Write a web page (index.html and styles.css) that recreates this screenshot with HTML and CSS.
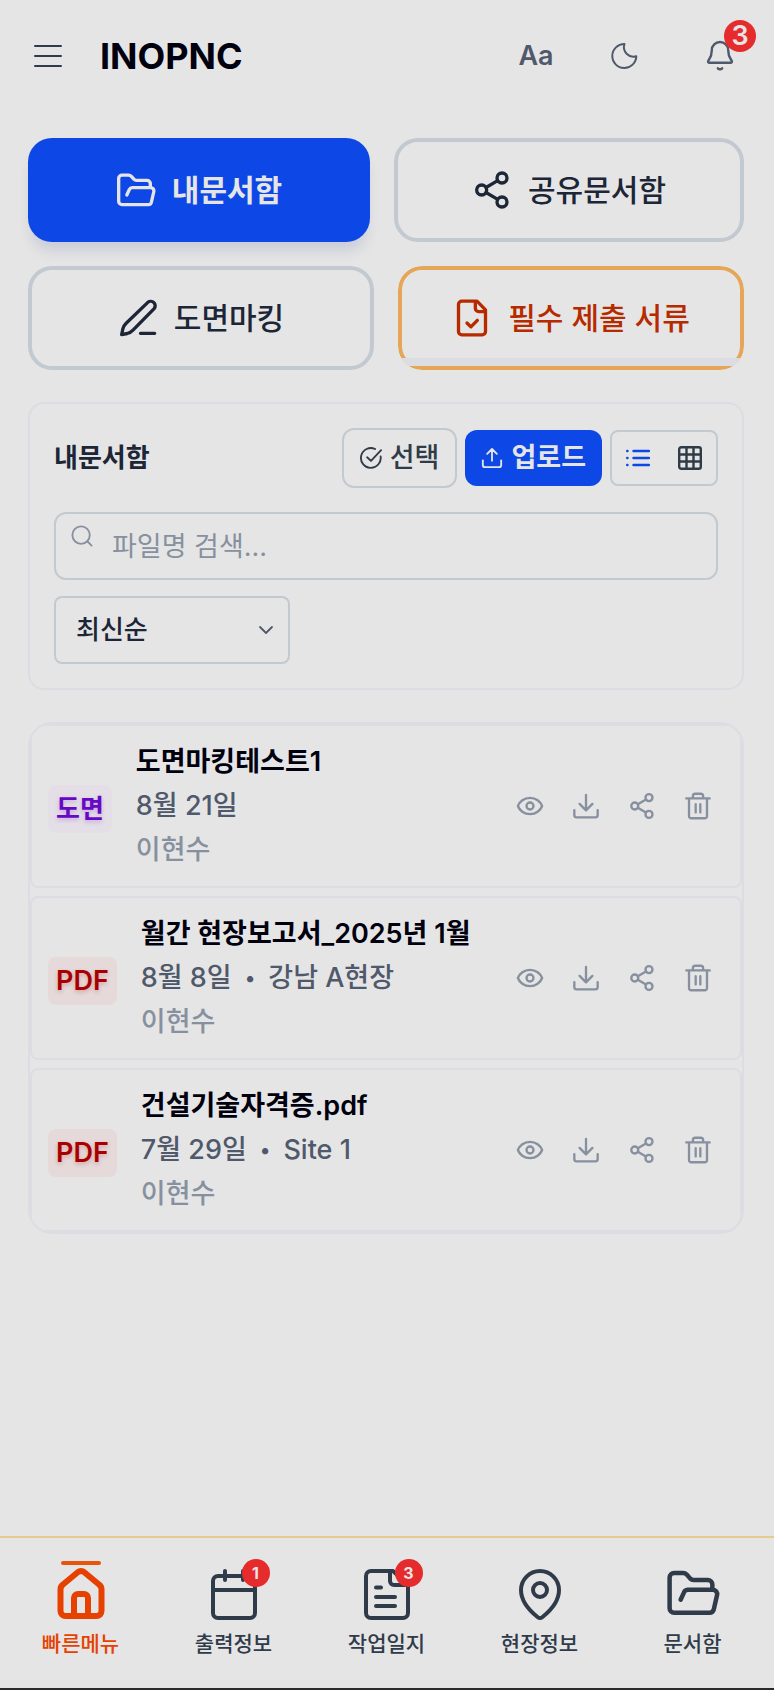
FILE: index.html
```html
<!DOCTYPE html>
<html lang="ko">
<head>
<meta charset="utf-8">
<meta name="viewport" content="width=device-width, initial-scale=1">
<title>INOPNC 문서함</title>
<link rel="stylesheet" href="styles.css">
</head>
<body>
<svg class="sprite" aria-hidden="true">
  <symbol id="folder" viewBox="0 0 24 24"><path d="M6.500 15l1.500-3.300a2 2 0 0 1 1.800-1.100h11.100a1.900 1.900 0 0 1 1.800 2.300l-1.500 6.500a1.900 1.900 0 0 1-1.800 1.400H3.600a2 2 0 0 1-2-2V5.100a2 2 0 0 1 2-2h4a2.200 2.200 0 0 1 1.600.7l1.500 1.700a2.200 2.200 0 0 0 1.600.7h6.300a2 2 0 0 1 2 2v2.400"/></symbol>
  <symbol id="share" viewBox="0 0 24 24"><circle cx="18" cy="4.8" r="3"/><circle cx="5.8" cy="12" r="3"/><circle cx="18" cy="19.2" r="3"/><path d="M8.4 10.5l7-4.1M8.4 13.5l7 4.1"/></symbol>
  <symbol id="pen" viewBox="0 0 24 24"><path d="M13.500 21.200h8.500M17.900 2.600a2.700 2.700 0 0 1 3.800 3.800L9 19.300a7 7 0 0 1-3.400 2l-3.400.7.700-3.400a7 7 0 0 1 2-3.400z"/></symbol>
  <symbol id="filecheck" viewBox="0 0 24 24"><path d="M15 1.900H5.900a2 2 0 0 0-2 2v16.200a2 2 0 0 0 2 2h12.200a2 2 0 0 0 2-2V7.100zM14 2v4.200a2 2 0 0 0 2 2h4M9 15l2.300 2.300 3.900-3.900"/></symbol>
  <symbol id="eye" viewBox="0 0 24 24"><path d="M1.6 12C3 8.200 7 5 12 5s9 3.200 10.400 7C21 15.800 17 19 12 19S3 15.800 1.600 12z"/><circle cx="12" cy="12" r="3"/></symbol>
  <symbol id="download" viewBox="0 0 24 24"><path d="M12 2.500v13M6.500 10.200l5.500 5.500 5.500-5.500M2 15.500v4.300a2 2 0 0 0 2 2h16a2 2 0 0 0 2-2v-4.300"/></symbol>
  <symbol id="trash" viewBox="0 0 24 24"><path d="M2 5.500h20M4.300 5.500v15.200a1.800 1.800 0 0 0 1.800 1.800h11.800a1.800 1.800 0 0 0 1.800-1.800V5.500M7.600 5.500V3.600A2.100 2.100 0 0 1 9.700 1.500h4.600a2.100 2.100 0 0 1 2.100 2.100v1.900M10 10.500v7M14 10.500v7"/></symbol>
</svg>

<header class="topbar">
  <button class="icon-button menu-button" aria-label="메뉴"><svg class="icon icon-menu" viewBox="0 0 32 32"><path d="M3 6h26M3 16h26M3 26h26"/></svg></button>
  <h1 class="brand">INOPNC</h1>
  <div class="tools">
    <button class="text-size" aria-label="글자 크기">Aa</button>
    <button class="icon-button tool" aria-label="다크 모드"><svg class="icon icon-tool" viewBox="0 0 32 32"><path d="M16.500 4A12 12 0 1 0 28.300 16.200a9.500 9.500 0 0 1-11.800-12.200z"/></svg></button>
    <button class="icon-button tool" aria-label="알림 3개"><svg class="icon icon-tool icon-bell" viewBox="0 0 32 32"><path d="M16 2a8.200 8.200 0 0 0-8.200 8.200c0 6.400-2 8-3.500 10.400a1.400 1.400 0 0 0 1.200 2.200h21a1.400 1.400 0 0 0 1.200-2.200c-1.500-2.400-3.500-4-3.500-10.400A8.200 8.200 0 0 0 16 2zM13.800 28.200a2.800 2.800 0 0 0 4.400 0"/></svg><span class="count count-large">3</span></button>
  </div>
</header>

<main class="content">
  <nav class="tabs" aria-label="문서함 종류">
    <div class="tab-row">
      <button class="tab tab-active"><svg class="icon icon-tab"><use href="#folder"/></svg>내문서함</button>
      <button class="tab"><svg class="icon icon-tab"><use href="#share"/></svg>공유문서함</button>
    </div>
    <div class="tab-row">
      <button class="tab"><svg class="icon icon-tab"><use href="#pen"/></svg>도면마킹</button>
      <button class="tab tab-required"><svg class="icon icon-tab"><use href="#filecheck"/></svg>필수 제출 서류</button>
    </div>
  </nav>

  <section class="panel">
    <div class="panel-head">
      <h2 class="panel-title">내문서함</h2>
      <div class="panel-actions">
        <button class="pick"><svg class="icon icon-small" viewBox="0 0 24 24"><path d="M22.500 10.200A10.800 10.800 0 1 1 16.500 2.200M7.800 11.200l4.200 4 11-11.700"/></svg>선택</button>
        <button class="upload"><svg class="icon icon-small" viewBox="0 0 24 24"><path d="M12 15V2.500M6.700 7.500L12 2.200l5.300 5.300M2 14.500v5a2.500 2.500 0 0 0 2.500 2.500h15a2.500 2.500 0 0 0 2.500-2.500v-5"/></svg>업로드</button>
        <div class="view-switch">
          <button class="view view-on" aria-label="목록 보기"><svg class="icon icon-view" viewBox="0 0 24 24"><path d="M7.500 5h15.500M7.500 12h15.500M7.500 19h15.500M1.200 5h.3M1.200 12h.3M1.200 19h.3"/></svg></button>
          <button class="view" aria-label="격자 보기"><svg class="icon icon-view" viewBox="0 0 24 24"><rect x="1.200" y="1.200" width="21.600" height="21.600" rx="2"/><path d="M1 8.500h22M1 15.500h22M8.500 1v22M15.500 1v22"/></svg></button>
        </div>
      </div>
    </div>
    <div class="filters">
      <div class="search">
        <svg class="icon search-icon" viewBox="0 0 24 24"><circle cx="11" cy="11" r="9.500"/><path d="M18 18l4.500 4.500"/></svg>
        <input class="search-input" type="text" aria-label="파일명 검색" placeholder="파일명 검색...">
      </div>
      <div class="sort">
        <select class="sort-select" aria-label="정렬"><option>최신순</option><option>이름순</option></select>
        <svg class="icon sort-icon" viewBox="0 0 16 16"><path d="M2 5l6 6 6-6"/></svg>
      </div>
    </div>
  </section>

  <ul class="files">
    <li class="file">
      <span class="kind kind-drawing">도면</span>
      <div class="file-text"><p class="file-name">도면마킹테스트1</p><p class="file-meta">8월 21일</p><p class="file-owner">이현수</p></div>
      <div class="file-actions">
        <button class="action" aria-label="보기"><svg class="icon icon-action"><use href="#eye"/></svg></button>
        <button class="action" aria-label="다운로드"><svg class="icon icon-action"><use href="#download"/></svg></button>
        <button class="action" aria-label="공유"><svg class="icon icon-action"><use href="#share"/></svg></button>
        <button class="action" aria-label="삭제"><svg class="icon icon-action"><use href="#trash"/></svg></button>
      </div>
    </li>
    <li class="file">
      <span class="kind kind-pdf">PDF</span>
      <div class="file-text"><p class="file-name">월간 현장보고서_2025년 1월</p><p class="file-meta"><span>8월 8일</span><span class="dot">•</span><span>강남 A현장</span></p><p class="file-owner">이현수</p></div>
      <div class="file-actions">
        <button class="action" aria-label="보기"><svg class="icon icon-action"><use href="#eye"/></svg></button>
        <button class="action" aria-label="다운로드"><svg class="icon icon-action"><use href="#download"/></svg></button>
        <button class="action" aria-label="공유"><svg class="icon icon-action"><use href="#share"/></svg></button>
        <button class="action" aria-label="삭제"><svg class="icon icon-action"><use href="#trash"/></svg></button>
      </div>
    </li>
    <li class="file">
      <span class="kind kind-pdf">PDF</span>
      <div class="file-text"><p class="file-name">건설기술자격증.pdf</p><p class="file-meta"><span>7월 29일</span><span class="dot">•</span><span>Site 1</span></p><p class="file-owner">이현수</p></div>
      <div class="file-actions">
        <button class="action" aria-label="보기"><svg class="icon icon-action"><use href="#eye"/></svg></button>
        <button class="action" aria-label="다운로드"><svg class="icon icon-action"><use href="#download"/></svg></button>
        <button class="action" aria-label="공유"><svg class="icon icon-action"><use href="#share"/></svg></button>
        <button class="action" aria-label="삭제"><svg class="icon icon-action"><use href="#trash"/></svg></button>
      </div>
    </li>
  </ul>
</main>

<nav class="bottom-nav" aria-label="주 메뉴">
  <a class="nav-item nav-current" href="#home"><span class="nav-icon"><svg class="icon icon-nav icon-home" viewBox="0 0 56 56"><path d="M28 5a5 5 0 0 0-3.300 1.300L10 18.500a6 6 0 0 0-2.500 5V45a5 5 0 0 0 5 5h31a5 5 0 0 0 5-5V23.500a6 6 0 0 0-2.500-5L31.300 6.300A5 5 0 0 0 28 5zM21 50V32a4 4 0 0 1 4-4h6a4 4 0 0 1 4 4v18"/></svg></span>빠른메뉴</a>
  <a class="nav-item" href="#attendance"><span class="nav-icon"><svg class="icon icon-nav" viewBox="0 0 56 56"><rect x="7" y="10" width="42" height="42" rx="5"/><path d="M7 24h42M19 5v9M37 5v9"/></svg><span class="count">1</span></span>출력정보</a>
  <a class="nav-item" href="#journal"><span class="nav-icon"><svg class="icon icon-nav" viewBox="0 0 56 56"><path d="M34 5H12a5 5 0 0 0-5 5v37a5 5 0 0 0 5 5h32a5 5 0 0 0 5-5V19zM31 5v10a4 4 0 0 0 4 4h14M17 21.500h5M17 31h19M17 40h19"/></svg><span class="count">3</span></span>작업일지</a>
  <a class="nav-item" href="#sites"><span class="nav-icon"><svg class="icon icon-nav" viewBox="0 0 56 56"><path d="M28 5A19 19 0 0 0 9 24c0 11 9 21 16.500 27a4 4 0 0 0 5 0C38 45 47 35 47 24A19 19 0 0 0 28 5z"/><circle cx="28" cy="24" r="7"/></svg></span>현장정보</a>
  <a class="nav-item" href="#documents"><span class="nav-icon"><svg class="icon icon-nav icon-documents"><use href="#folder"/></svg></span>문서함</a>
</nav>
</body>
</html>
```
FILE: styles.css
```css
* { box-sizing: border-box; }
body {
  margin: 0;
  min-height: 100vh;
  display: flex;
  flex-direction: column;
  background: #e5e5e5;
  color: #1c2637;
  font-family: Inter, "Noto Sans CJK KR", sans-serif;
  font-size: 27px;
  font-weight: 500;
  line-height: 40px;
}
h1, h2, p, ul { margin: 0; padding: 0; }
button, input, select {
  margin: 0;
  padding: 0;
  border: 0;
  background: none;
  color: inherit;
  font: inherit;
}
.sprite { position: absolute; width: 0; height: 0; }
.icon {
  flex: none;
  display: block;
  fill: none;
  stroke: currentColor;
  stroke-width: 2;
  stroke-linecap: round;
  stroke-linejoin: round;
}

.topbar {
  display: flex;
  align-items: center;
  height: 112px;
  padding: 0 14px 0 28px;
}
.icon-button {
  display: flex;
  align-items: center;
  justify-content: center;
  height: 64px;
}
.menu-button { width: 40px; color: #303b4d; }
.icon-menu { width: 32px; height: 32px; }
.brand {
  margin-left: 32px;
  color: #00000f;
  font-size: 36px;
  line-height: 44px;
  font-weight: 700;
}
.tools {
  display: flex;
  gap: 16px;
  margin-left: auto;
  color: #50596b;
}
.text-size { width: 64px; font-weight: 600; }
.tool { position: relative; width: 80px; }
.icon-tool { width: 32px; height: 32px; }
.icon-bell { stroke-width: 2.4; }
.count {
  position: absolute;
  top: -7px;
  right: -8px;
  width: 28px;
  height: 28px;
  border-radius: 50%;
  background: #e52b2b;
  color: #e5e5e5;
  font-size: 16px;
  line-height: 28px;
  font-weight: 700;
  text-align: center;
}
.count-large {
  top: -4px;
  right: 4px;
  width: 32px;
  height: 32px;
  font-size: 27px;
  line-height: 32px;
  font-weight: 600;
}

.content {
  display: flex;
  flex-direction: column;
  gap: 32px;
  padding: 26px 30px 32px 28px;
}
.tabs { display: flex; flex-direction: column; gap: 24px; }
.tab-row { display: flex; gap: 24px; }
.tab {
  position: relative;
  flex: 1 1 0;
  display: flex;
  align-items: center;
  justify-content: center;
  gap: 16px;
  height: 104px;
  border: 4px solid #c3c9d0;
  border-radius: 24px;
  font-size: 30px;
  font-weight: 500;
  white-space: nowrap;
}
.tab-active {
  border: 0;
  background: #0d47e6;
  color: #e5e5e5;
  font-weight: 600;
  box-shadow: 0 12px 14px -4px rgba(30, 50, 140, 0.14);
}
.tab-required {
  border-color: #e5a757;
  color: #b62a00;
  clip-path: inset(0 round 24px);
}
.tab-required::after {
  content: "";
  position: absolute;
  right: -4px;
  bottom: 0;
  left: -4px;
  height: 8px;
  background: #dcdde3;
}
.icon-tab { width: 40px; height: 40px; }

.panel {
  display: flex;
  flex-direction: column;
  gap: 24px;
  padding: 24px;
  border: 2px solid #dcdde3;
  border-radius: 16px;
}
.panel-head, .panel-actions { display: flex; align-items: center; }
.panel-head { justify-content: space-between; }
.panel-title { font-size: 26px; font-weight: 600; }
.panel-actions { gap: 8px; }
.pick, .upload { display: flex; align-items: center; gap: 8px; }
.pick {
  height: 60px;
  padding: 0 16px;
  border: 2px solid #c3c9d0;
  border-radius: 12px;
  color: #303b48;
}
.upload {
  height: 56px;
  padding: 0 16px;
  border-radius: 12px;
  background: #0d47e6;
  color: #e5e5e5;
  font-weight: 600;
}
.icon-small { width: 22px; height: 22px; }
.view-switch {
  display: flex;
  height: 56px;
  border: 2px solid #c3c9d0;
  border-radius: 8px;
}
.view {
  display: flex;
  align-items: center;
  justify-content: center;
  width: 52px;
  color: #303b48;
}
.view-on { color: #0d47e6; }
.icon-view { width: 24px; height: 24px; stroke-width: 2.4; }
.filters { display: flex; flex-direction: column; gap: 16px; }
.search { position: relative; }
.search-icon {
  position: absolute;
  top: 13px;
  left: 17px;
  width: 22px;
  height: 22px;
  color: #87909f;
}
.search-input {
  display: block;
  width: 100%;
  height: 68px;
  padding: 0 24px 0 56px;
  border: 2px solid #c3c9d0;
  border-radius: 12px;
  font-weight: 400;
}
.search-input::placeholder { color: #87909f; opacity: 1; }
.sort { position: relative; width: 236px; }
.sort-select {
  display: block;
  appearance: none;
  width: 100%;
  height: 68px;
  padding: 0 20px;
  border: 2px solid #c3c9d0;
  border-radius: 8px;
  font-size: 26px;
}
.sort-icon {
  position: absolute;
  top: 26px;
  right: 16px;
  width: 16px;
  height: 16px;
  color: #50596b;
  stroke-width: 1.8;
  pointer-events: none;
}

.files {
  display: flex;
  flex-direction: column;
  gap: 8px;
  overflow: hidden;
  border: 2px solid #dcdde3;
  border-radius: 24px;
  list-style: none;
}
.file {
  display: flex;
  align-items: center;
  gap: 24px;
  padding: 14px 16px;
  border: 2px solid #dcdde3;
  border-radius: 8px;
}
.kind {
  margin-top: 6px;
  padding: 0 8px;
  border-radius: 8px;
  line-height: 48px;
  font-weight: 600;
  white-space: nowrap;
}
.kind-drawing {
  background: #e4dfe6;
  color: #6608c4;
  font-size: 26px;
  text-shadow: 0 2px 4px rgba(102, 8, 196, 0.25);
}
.kind-pdf {
  background: #e5d9d9;
  color: #a80000;
  text-shadow: 0 2px 4px rgba(168, 0, 0, 0.25);
}
.file-text { flex: 1; min-width: 0; line-height: 44px; }
.file-name { color: #00000f; font-weight: 600; white-space: nowrap; }
.file-meta { display: flex; gap: 13px; color: #50596b; }
.dot { font-size: 20px; }
.file-owner { color: #87909f; }
.file-actions { display: flex; gap: 4px; color: #87909f; }
.action {
  display: flex;
  align-items: center;
  justify-content: center;
  width: 52px;
  height: 52px;
}
.icon-action { width: 28px; height: 28px; }

.bottom-nav {
  display: flex;
  margin-top: auto;
  padding: 28px 5px 30px 4px;
  border-top: 2px solid #e6cb8c;
  border-bottom: 2px solid #2a2c2c;
}
.nav-item {
  position: relative;
  flex: 1;
  display: flex;
  flex-direction: column;
  align-items: center;
  gap: 8px;
  color: #303b4a;
  font-size: 21px;
  line-height: 28px;
  text-decoration: none;
}
.nav-current { color: #e64100; }
.nav-current::before {
  content: "";
  position: absolute;
  top: -5px;
  width: 40px;
  height: 4px;
  border-radius: 2px;
  background: #e9520f;
}
.nav-icon {
  position: relative;
  display: flex;
  justify-content: center;
  width: 56px;
  height: 56px;
}
.icon-nav { width: 56px; height: 56px; stroke-width: 4; }
.icon-home { stroke-width: 6; }
.icon-documents { width: 54px; height: 54px; stroke-width: 2; }
```
